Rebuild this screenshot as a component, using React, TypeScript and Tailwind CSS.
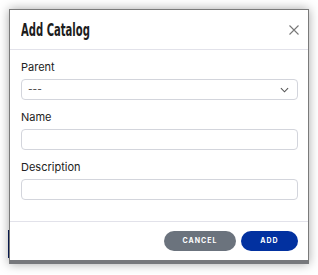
import React from "react";

const ChevronDown = () => (
  <svg className="w-[9px] h-[6px]" viewBox="0 0 10 6" fill="none">
    <path d="M1 1l4 4 4-4" stroke="#555" strokeWidth="1.2" />
  </svg>
);

const Field: React.FC<{ label: string; children: React.ReactNode }> = ({ label, children }) => (
  <div className="flex flex-col">
    <label className="text-[11px] leading-[14px] text-[#222] mb-[5px]">{label}</label>
    {children}
  </div>
);

export default function App() {
  return (
    <div
      className="relative w-[318px] h-[275px] bg-white overflow-hidden pt-[9px] pl-[9px]"
      style={{ fontFamily: "Inter, 'Open Sans', sans-serif" }}
    >
      {/* bit of the page behind the modal */}
      <div className="absolute left-[8px] top-[230px] w-[3px] h-[28px] bg-[#0b1f5c]" />
      <div className="relative w-[300px] bg-white border border-[#7a7a7a] border-b-4 border-b-[#77787c] shadow-[0_0_10px_rgba(0,0,0,0.35)]">
        <div className="h-[40px] flex items-center justify-between pl-[11px] pr-[9px] border-b border-[#e2e2ea]">
          <h2
            className="text-[18px] font-bold text-[#1c1c1c] scale-x-[0.62] origin-left whitespace-nowrap"
            style={{ fontFamily: "'DejaVu Sans Condensed', sans-serif" }}
          >
            Add Catalog
          </h2>
          <button className="text-[#777] w-[11px] h-[11px] flex items-center justify-center">
            <svg viewBox="0 0 10 10" className="w-[10px] h-[10px]">
              <path d="M0.5 0.5l9 9M9.5 0.5l-9 9" stroke="#777" strokeWidth="1.1" />
            </svg>
          </button>
        </div>
        <div className="pl-[11px] pr-[10px] pt-[10px] pb-[21px] flex flex-col gap-[10px]">
          <Field label="Parent">
            <div className="h-[21px] border border-[#d3d5dc] rounded-[4px] flex items-center justify-between pl-[6px] pr-[8px]">
              <span className="text-[10px] text-[#333]">---</span>
              <ChevronDown />
            </div>
          </Field>
          <Field label="Name">
            <input className="h-[21px] border border-[#d3d5dc] rounded-[4px] outline-none" />
          </Field>
          <Field label="Description">
            <input className="h-[21px] border border-[#d3d5dc] rounded-[4px] outline-none" />
          </Field>
        </div>
        <div className="border-t border-[#e2e2ea] h-[39px] flex items-center justify-end gap-[5px] pr-[10px]">
          <button className="w-[72px] h-[20px] rounded-full bg-[#6b737d] text-white text-[7px] font-bold tracking-[1px]">
            CANCEL
          </button>
          <button className="w-[57px] h-[20px] rounded-full bg-[#0231a0] text-white text-[7px] font-bold tracking-[1px]">
            ADD
          </button>
        </div>
      </div>
    </div>
  );
}
